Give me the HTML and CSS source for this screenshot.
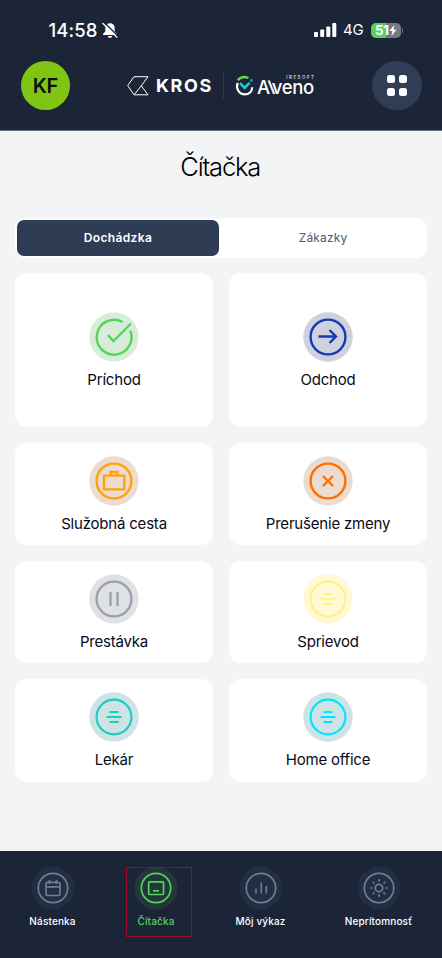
FILE: index.html
```html
<!DOCTYPE html>
<html lang="sk">
<head>
<meta charset="utf-8">
<title>Čítačka</title>
<link rel="stylesheet" href="styles.css">
</head>
<body>
<div class="app">
  <header class="header">
    <div class="status">
      <div class="clock"><span class="time">14:58</span>
        <svg class="bell" viewBox="0 0 16 17"><path d="M8 1.200c-3 0-4.700 2.100-4.700 5v3.200L1 12v1h14v-1l-2.300-2.600V6.200c0-2.900-1.700-5-4.700-5zM5.700 14c.3 1.300 1.200 2 2.300 2s2-.7 2.300-2z" fill="#fff"/><path d="M2 .2 16 14" stroke="#1b2537" stroke-width="1.300"/><path d="M.7 1.300 14.900 15.200" stroke="#fff" stroke-width="1.200" stroke-linecap="round"/></svg>
      </div>
      <div class="signals">
        <svg class="bars" viewBox="0 0 23 15" fill="#fff"><rect x="0" y="9" width="4" height="5" rx="1"/><rect x="6.200" y="6.500" width="4" height="7.500" rx="1"/><rect x="12.300" y="3.500" width="4" height="10.500" rx="1"/><rect x="18.300" y="0" width="4" height="14" rx="1"/></svg>
        <span class="network">4G</span>
        <div class="battery"><span>51</span><svg viewBox="0 0 8 11"><path d="M5.200 0 .5 6h2.800L2.500 11 7.500 4.700H4.600z" fill="#fff"/></svg></div><i class="battery-tip"></i>
      </div>
    </div>
    <div class="brand-row">
      <div class="avatar">KF</div>
      <div class="brands">
        <svg class="kros-mark" viewBox="0 0 22 20" fill="none" stroke="#fff" stroke-width="1"><path d="M21 .7H7L.7 9.500 7 18.800H21L14.300 9.800zM7 18.800 14.300 9.800"/></svg>
        <span class="kros">KROS</span>
        <i class="divider"></i>
        <svg class="aveno-mark" viewBox="0 0 18 20" fill="none"><path d="M1.700 6.800C-.3 12 2.700 18.400 8.700 18.400c4.500 0 7.300-3 7.500-7.200" stroke="#fff" stroke-width="2.200"/><path d="M1.800 4.300C4.400 1 8.600.4 12.500 2" stroke="#62d74b" stroke-width="2.400"/><path d="m4.100 7.200 4.500 4.600 4.900-5" stroke="#20cfcf" stroke-width="2.600"/><circle cx="15.400" cy="4.400" r="1.300" fill="#20a9b0"/></svg>
        <div class="aveno"><span class="iresoft">IRESOFT</span><span class="aveno-name">A<span class="l">l</span>veno</span></div>
      </div>
      <div class="apps"><i></i><i></i><i></i><i></i></div>
    </div>
  </header>
  <main class="main">
    <h1 class="title">Čítačka</h1>
    <div class="tabs"><div class="tab active">Dochádzka</div><div class="tab">Zákazky</div></div>
    <div class="cards">
      <div class="card green"><svg class="icon" viewBox="0 0 50 50"><circle class="halo" cx="25" cy="25" r="24.700"/><path d="M33.500 10A17.400 17.400 0 1 0 41.200 18.600"/><path d="m18.800 23 5.700 6L42 11.500"/></svg><span>Príchod</span></div>
      <div class="card blue"><svg class="icon" viewBox="0 0 50 50"><circle class="halo" cx="25" cy="25" r="24.700"/><circle cx="25" cy="25" r="17.400"/><path d="M15.500 24.500H33M26.500 18l6.500 6.500-6.500 6.500"/></svg><span>Odchod</span></div>
      <div class="card amber"><svg class="icon" viewBox="0 0 50 50"><circle class="halo" cx="25" cy="25" r="24.700"/><circle cx="25" cy="25" r="17.400"/><rect x="15" y="19.600" width="20.300" height="13.800" rx=".7"/><path d="M21.500 19v-3h7v3"/></svg><span>Služobná cesta</span></div>
      <div class="card orange"><svg class="icon" viewBox="0 0 50 50"><circle class="halo" cx="25" cy="25" r="24.700"/><circle cx="25" cy="25" r="17.400"/><path d="m20 20 10 10m0-10-10 10"/></svg><span>Prerušenie zmeny</span></div>
      <div class="card gray"><svg class="icon" viewBox="0 0 50 50"><circle class="halo" cx="25" cy="25" r="24.700"/><circle cx="25" cy="25" r="17.400"/><path d="M21.500 18v14M28.500 18v14"/></svg><span>Prestávka</span></div>
      <div class="card yellow"><svg class="icon lines" viewBox="0 0 50 50"><circle class="halo" cx="25" cy="25" r="24.700"/><circle cx="25" cy="25" r="17.400"/><path d="M20.500 20h9M17.500 25h15M20.500 30h9"/></svg><span>Sprievod</span></div>
      <div class="card teal"><svg class="icon lines" viewBox="0 0 50 50"><circle class="halo" cx="25" cy="25" r="24.700"/><circle cx="25" cy="25" r="17.400"/><path d="M20.500 20h9M17.500 25h15M20.500 30h9"/></svg><span>Lekár</span></div>
      <div class="card cyan"><svg class="icon lines" viewBox="0 0 50 50"><circle class="halo" cx="25" cy="25" r="24.700"/><circle cx="25" cy="25" r="17.400"/><path d="M20.500 20h9M17.500 25h15M20.500 30h9"/></svg><span>Home office</span></div>
    </div>
  </main>
  <nav class="nav">
    <div class="nav-item"><svg viewBox="0 0 44 44"><circle class="halo" cx="22" cy="22" r="21.500"/><circle cx="22" cy="22" r="14.700"/><rect x="15" y="16.300" width="14" height="13.200" rx="1.500"/><path d="M15 20.800h14M18.500 14v4M25.500 14v4"/></svg><span>Nástenka</span></div>
    <div class="nav-item current"><svg viewBox="0 0 44 44"><circle class="halo" cx="22" cy="22" r="21.500"/><circle cx="22" cy="22" r="14.700"/><rect x="14.700" y="15.800" width="14.800" height="12.700" rx=".8"/><path d="M19 24.800h6"/></svg><span>Čítačka</span><i class="marker"></i></div>
    <div class="nav-item"><svg viewBox="0 0 44 44"><circle class="halo" cx="22" cy="22" r="21.500"/><circle cx="22" cy="22" r="14.700"/><path d="M17 22.500V27.500M22.300 16.500V27.500M27.300 20V27.500"/></svg><span>Môj výkaz</span></div>
    <div class="nav-item last"><svg viewBox="0 0 44 44"><circle class="halo" cx="22" cy="22" r="21.500"/><circle cx="22" cy="22" r="14.700"/><circle cx="22" cy="22" r="3.700"/><path d="M22 13.200v2.500M22 28.300v2.500M13.200 22h2.500M28.300 22h2.500M15.800 15.800l1.700 1.700M26.500 26.500l1.700 1.700M15.800 28.200l1.700-1.700M26.500 17.500l1.700-1.700"/></svg><span>Neprítomnosť</span></div>
  </nav>
</div>
</body>
</html>
```

FILE: styles.css
```css
* { box-sizing: border-box; }
body { margin: 0; background: #f3f4f6; font-family: Inter, "Liberation Sans", sans-serif; color: #050b18; }
svg { display: block; overflow: visible; }
.app { width: 442px; height: 958px; display: flex; flex-direction: column; }
.header { height: 131px; flex: none; background: #1b2537; border-bottom: 1px solid #6b7280; }
.status { height: 60px; padding: 0 39px 0 48.500px; display: flex; justify-content: space-between; align-items: center; color: #fff; }
.clock { display: flex; align-items: center; gap: 4px; }
.time { font-size: 18.500px; font-weight: 500; letter-spacing: .1px; }
.bell { width: 16px; height: 17px; }
.signals { display: flex; align-items: center; }
.bars { width: 23px; height: 15px; margin-right: 6px; }
.network { font-size: 15px; width: 28px; line-height: 18px; letter-spacing: -.2px; }
.battery { width: 30px; height: 15px; border-radius: 5px; background: linear-gradient(90deg, #5ad15b 50%, #737b82 50%); display: flex; align-items: center; padding-left: 4px; font-size: 13.500px; font-weight: 700; letter-spacing: -.3px; }
.battery svg { width: 8px; height: 11px; }
.battery-tip { width: 1px; height: 5px; margin-left: 1px; background: #6b7280; }
.brand-row { height: 50.500px; padding: .5px 20.500px 0; display: flex; justify-content: space-between; align-items: center; }
.avatar { width: 49.500px; height: 49.500px; border-radius: 50%; background: #80c514; color: #0b0e13; display: flex; justify-content: center; align-items: center; font-size: 20px; font-weight: 600; letter-spacing: -.5px; }
.brands { display: flex; align-items: center; height: 26px; color: #fff; }
.kros-mark { width: 22px; height: 20px; margin-right: 7px; }
.kros { width: 67px; font-size: 18px; line-height: 20px; font-weight: 700; letter-spacing: 1.600px; }
.divider { width: 1px; height: 25px; background: #303d53; margin-right: 12px; }
.aveno-mark { width: 18px; height: 20px; margin-right: 3px; }
.aveno { height: 20px; width: 58px; display: flex; flex-direction: column; align-items: flex-start; }
.aveno-name { font-size: 18.500px; line-height: 15px; letter-spacing: -.35px; font-weight: 500; }
.aveno-name .l { display: inline-block; transform: skewX(22deg); margin: 0 -1.200px 0 -1.200px; }
.iresoft { align-self: flex-end; margin: 0 -.5px 0 0; font-size: 4.500px; line-height: 4px; letter-spacing: 1.500px; }
.apps { width: 49.500px; height: 49.500px; border-radius: 50%; background: #303d55; display: grid; grid-template-columns: 8px 8px; gap: 4.500px; align-content: center; justify-content: center; }
.apps i { width: 8px; height: 8px; border-radius: 2.500px; background: #fff; }
.main { flex: 1; padding: 17px 15px 0; }
.title { margin: 0; height: 38px; line-height: 38px; text-align: center; font-size: 25.500px; font-weight: 300; letter-spacing: -1.150px; text-indent: -1.500px; color: #000; }
.tabs { margin: 32px 0 15px; height: 40px; border-radius: 10px; background: #fff; padding: 2px; display: flex; }
.tab { flex: 1; height: 36px; border-radius: 7px; display: flex; align-items: center; justify-content: center; font-size: 12px; line-height: 14px; padding-bottom: 1px; letter-spacing: .15px; color: #4f5b6e; padding-left: 2px; }
.tab.active { flex: 0 0 202px; background: #2e3d54; color: #fff; font-weight: 600; letter-spacing: .35px; padding-left: 0; }
.cards { display: grid; grid-template-columns: 198px 198px; grid-template-rows: 154px 102.500px 102.500px 102.500px; column-gap: 16px; row-gap: 15.700px; }
.card { background: #fff; border-radius: 12px; display: flex; flex-direction: column; align-items: center; justify-content: center; font-size: 15px; line-height: 20px; letter-spacing: -.2px; padding-top: 3px; }
.icon { width: 50px; height: 50px; margin-bottom: 8px; margin-top: -1px; fill: none; stroke: currentColor; stroke-width: 2.400; }
.card span { color: #050b18; }
.icon .halo { stroke: none; }
.lines { stroke-width: 2.100; }
.green { color: #55d45c; } .green .halo { fill: #d8edd8; }
.blue { color: #153bb4; } .blue .halo { fill: #cfd2de; }
.amber { color: #ffa20d; } .amber .halo { fill: #ebdccf; }
.orange { color: #ff7000; } .orange .halo { fill: #ebdccf; }
.gray { color: #9ca2ab; } .gray .halo { fill: #e0e1e5; }
.yellow { color: #fff08e; } .yellow .halo { fill: #fffad4; }
.teal { color: #18cec0; } .teal .halo { fill: #cde3e5; }
.cyan { color: #00e6ff; } .cyan .halo { fill: #cde3e5; }
.nav { flex: none; height: 107px; padding-top: 15px; background: #1b2537; display: grid; grid-template-columns: 105px 102px 107px 128px; }
.nav-item { position: relative; display: flex; flex-direction: column; align-items: center; color: #fff; font-size: 10px; font-weight: 500; line-height: 14px; letter-spacing: .15px; }
.nav-item.last { padding-left: 1px; }
.nav-item svg { width: 44px; height: 44px; margin-bottom: 4px; fill: none; stroke: #6c7c9b; stroke-width: 1.700; }
.nav-item .halo { fill: #222f40; stroke: none; }
.nav-item.current { color: #55d45c; }
.nav-item.current svg { stroke: #55d45c; }
.nav-item.current .halo { fill: #24363a; }
.marker { position: absolute; left: 21px; top: 1px; width: 66px; height: 70px; border: 1px solid #a00828; }
```
